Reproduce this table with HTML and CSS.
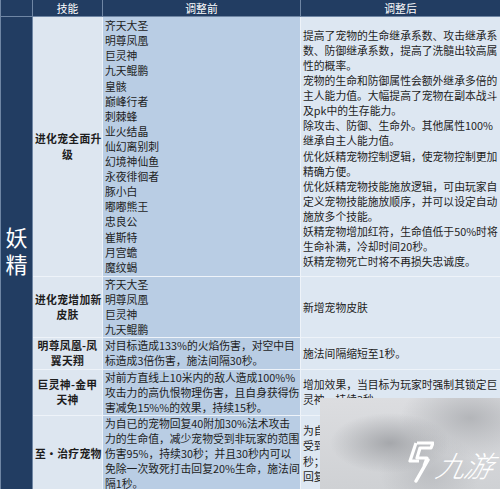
FILE: index.html
```html
<!DOCTYPE html>
<html lang="zh">
<head>
<meta charset="utf-8">
<link rel="stylesheet" href="styles.css">
</head>
<body>
<div class="page">
<table class="tbl">
  <colgroup>
    <col class="c1"><col class="c2"><col class="c3"><col class="c4">
  </colgroup>
  <thead>
    <tr class="hd">
      <th class="cat"></th>
      <th>技能</th>
      <th>调整前</th>
      <th>调整后</th>
    </tr>
  </thead>
  <tbody>
    <tr class="r1">
      <td class="cat" rowspan="5"><div class="catname"><span>妖</span><span>精</span></div></td>
      <td class="skill">进化宠全面升<br>级</td>
      <td class="before">齐天大圣<br>明尊凤凰<br>巨灵神<br>九天鲲鹏<br>皇骸<br>巅峰行者<br>刺棘蜂<br>业火结晶<br>仙幻离别刺<br>幻境神仙鱼<br>永夜徘徊者<br>豚小白<br>嘟嘟熊王<br>忠良公<br>崔斯特<br>月宫蟾<br>魔纹蝎</td>
      <td class="after">提高了宠物的生命继承系数、攻击继承系<br>数、防御继承系数，提高了洗髓出较高属<br>性的概率。<br>宠物的生命和防御属性会额外继承多倍的<br>主人能力值。大幅提高了宠物在副本战斗<br>及pk中的生存能力。<br>除攻击、防御、生命外。其他属性100%<br>继承自主人能力值。<br>优化妖精宠物控制逻辑，使宠物控制更加<br>精确方便。<br>优化妖精宠物技能施放逻辑，可由玩家自<br>定义宠物技能施放顺序，并可以设定自动<br>施放多个技能。<br>妖精宠物增加红符，生命值低于50%时将<br>生命补满，冷却时间20秒。<br>妖精宠物死亡时将不再损失忠诚度。</td>
    </tr>
    <tr class="r2">
      <td class="skill">进化宠增加新<br>皮肤</td>
      <td class="before">齐天大圣<br>明尊凤凰<br>巨灵神<br>九天鲲鹏</td>
      <td class="after">新增宠物皮肤</td>
    </tr>
    <tr class="r3">
      <td class="skill">明尊凤凰-凤<br>翼天翔</td>
      <td class="before">对目标造成133%的火焰伤害，对空中目<br>标造成3倍伤害，施法间隔30秒。</td>
      <td class="after">施法间隔缩短至1秒。</td>
    </tr>
    <tr class="r4">
      <td class="skill">巨灵神-金甲<br>天神</td>
      <td class="before">对前方直线上10米内的敌人造成100%%<br>攻击力的高仇恨物理伤害，且自身获得伤<br>害减免15%%的效果，持续15秒。</td>
      <td class="after">增加效果，当目标为玩家时强制其锁定巨<br>灵神，持续3秒。</td>
    </tr>
    <tr class="r5">
      <td class="skill">至·治疗宠物</td>
      <td class="before">为自已的宠物回复40附加30%法术攻击<br>力的生命值，减少宠物受到非玩家的范围<br>伤害95%，持续30秒；并且30秒内可以<br>免除一次致死打击回复20%生命，施法间<br>隔1秒。</td>
      <td class="after">为自己的宠物回复生命值，减少宠物<br>受到非玩家的范围伤害95%，持续30<br>秒；并且30秒内可以免除一次致死打击<br>回复20%生命，施法间隔1秒。</td>
    </tr>
  </tbody>
</table>
<div class="wm">
  <div class="wm-logo">
    <svg class="wm-mark" viewBox="0 0 26 42" width="26" height="42">
      <path d="M9 2 L25 2 L23 7 L12 7 L9 17 L19 17 L16 25" fill="none" stroke="#fff" stroke-width="3.2" stroke-linejoin="round"/>
      <path d="M8 2 L2 20 L11 20" fill="none" stroke="#fff" stroke-width="3.2" stroke-linejoin="round"/>
      <path d="M20 19 L8 40" fill="none" stroke="#fff" stroke-width="3.4" stroke-linecap="round"/>
    </svg>
    <span class="wm-text">九游</span>
  </div>
</div>
</div>
</body>
</html>
```

FILE: styles.css
```css
html, body {
  margin: 0;
  padding: 0;
  background: #ffffff;
}
.page {
  position: relative;
  width: 500px;
  height: 489px;
  overflow: hidden;
}
.tbl {
  width: 500px;
  table-layout: fixed;
  border-collapse: collapse;
  font-family: "Noto Sans CJK SC", "Liberation Sans", sans-serif;
  font-size: 10.8px;
  line-height: 15.1px;
  color: #1d1d1d;
}
.c1 { width: 32px; }
.c2 { width: 70px; }
.c3 { width: 198px; }
.c4 { width: 200px; }
.tbl th, .tbl td {
  padding: 0 2px;
  border: 1px solid #eef3f9;
  vertical-align: middle;
  white-space: nowrap;
  overflow: hidden;
}
.hd th {
  height: 16px;
  background: #223d62;
  color: #ffffff;
  font-weight: normal;
  text-align: center;
  line-height: 14px;
  border-color: #6f86a4;
  border-top: 0;
}
.tbl td.cat {
  background: #223d62;
  color: #ffffff;
  text-align: center;
  padding: 0;
  border-color: #6f86a4;
}
.catname {
  display: flex;
  flex-direction: column;
  align-items: center;
  font-size: 22px;
  line-height: 27px;
  margin-top: -8px;
}
.skill {
  background: #dde6f0;
  font-weight: bold;
  text-align: center;
  letter-spacing: 0.3px;
}
.before {
  background: #b9cde4;
}
.after {
  background: #dde7f2;
}
.r1 td { height: 255px; }
.r2 td { height: 60px; }
.r3 td { height: 29px; }
.r4 td { height: 43px; }
.r5 td { height: 74px; }
.r1 .after { padding-top: 4px; }

.wm {
  position: absolute;
  left: 320px;
  top: 398px;
  width: 180px;
  height: 91px;
  background:
    radial-gradient(ellipse 60px 30px at 70px 45px, rgba(160,162,166,0.9), rgba(160,162,166,0) 100%),
    radial-gradient(ellipse 70px 40px at 150px 20px, rgba(170,172,176,0.8), rgba(170,172,176,0) 100%),
    radial-gradient(ellipse 50px 40px at 110px 75px, rgba(180,182,186,0.7), rgba(180,182,186,0) 100%),
    linear-gradient(180deg, #dcdde0, #cfd1d4);
}
.wm-logo {
  position: absolute;
  left: 88px;
  top: 43px;
  display: flex;
  align-items: center;
  gap: 3px;
}
.wm-mark {
  display: block;
}
.wm-text {
  color: #ffffff;
  font-family: "Noto Sans CJK SC", sans-serif;
  font-size: 29px;
  line-height: 32px;
  font-style: italic;
  font-weight: 300;
  letter-spacing: -1px;
  transform: skewX(-12deg);
  margin-top: 4px;
}
```
